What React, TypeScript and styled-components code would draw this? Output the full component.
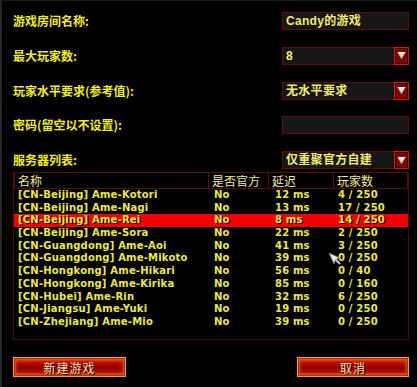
import React from "react";
import styled, { createGlobalStyle } from "styled-components";

const Global = createGlobalStyle`
  html, body { margin: 0; padding: 0; background: #000; }
  body { width: 417px; height: 387px; overflow: hidden; }
`;

const Screen = styled.div`
  position: relative;
  box-sizing: border-box;
  width: 417px;
  height: 387px;
  background: #000;
  border-left: 2px solid #262626;
  border-top: 1px solid #1c1c1c;
  padding: 11px 8px 0 11px;
  display: flex;
  flex-direction: column;
  font-family: "Noto Sans CJK SC", "Liberation Sans", sans-serif;
`;

const Form = styled.div`
  display: flex;
  flex-direction: column;
  gap: 16.75px;
`;

const FormRow = styled.div`
  display: flex;
  align-items: center;
  justify-content: space-between;
  height: 18px;
`;

const Label = styled.span`
  color: #f4ee1a;
  font-size: 12px;
  font-weight: 700;
  line-height: 18px;
  text-shadow: 1px 1px 0 #000;
  white-space: nowrap;
`;

const Field = styled.div`
  box-sizing: border-box;
  width: 127px;
  height: 18px;
  display: flex;
  align-items: stretch;
  background: #161616;
  border: 1px solid #5e0c0c;
`;

const FieldText = styled.span`
  flex: 1;
  padding-left: 3px;
  color: #f2ec6a;
  font-size: 12px;
  font-weight: 700;
  line-height: 16px;
  font-family: "Liberation Sans", "Noto Sans CJK SC", sans-serif;
  letter-spacing: 0.3px;
  white-space: nowrap;
`;

const ArrowBtn = styled.div`
  box-sizing: border-box;
  width: 15px;
  margin: -1px -1px -1px 0;
  background: #7a0606;
  border: 1px solid #d01a1a;
  box-shadow: inset 0 0 0 1px #4a0000;
  display: flex;
  align-items: center;
  justify-content: center;
`;

const Table = styled.div`
  box-sizing: border-box;
  margin-top: 3px;
  height: 168px;
  border: 1px solid #4a0a0a;
  border-top: none;
  display: flex;
  flex-direction: column;
`;

const cols = "195px 60px 65px 1fr";

const HeaderRow = styled.div`
  display: grid;
  grid-template-columns: ${cols};
  height: 17px;
`;

const HeaderCell = styled.div`
  box-sizing: border-box;
  border: 1px solid #5a0c0c;
  margin-left: -1px;
  padding-left: 3px;
  color: #f0ea9a;
  font-size: 12px;
  line-height: 15px;
  white-space: nowrap;
  &:first-child { margin-left: 0; }
`;

const DataRow = styled.div<{ $sel?: boolean }>`
  display: grid;
  grid-template-columns: ${cols};
  height: 12.7px;
  background: ${(p) => (p.$sel ? "#f20000" : "transparent")};
`;

const Cell = styled.div<{ $pad: number }>`
  padding-left: ${(p) => p.$pad}px;
  color: #ecea3c;
  font-family: "DejaVu Sans", "Liberation Sans", sans-serif;
  font-size: 10px;
  font-weight: 700;
  letter-spacing: 0.2px;
  line-height: 12.7px;
  white-space: nowrap;
  text-shadow: 1px 1px 0 #000;
`;

const Buttons = styled.div`
  margin-top: 17px;
  display: flex;
  justify-content: space-between;
`;

const GameButton = styled.div<{ $w: number }>`
  box-sizing: border-box;
  width: ${(p) => p.$w}px;
  height: 20px;
  border: 1px solid #f0a040;
  background: linear-gradient(
    to bottom,
    #e04a10 0%,
    #b80c04 25%,
    #8e0000 55%,
    #b00a02 80%,
    #e05010 100%
  );
  box-shadow: inset 0 0 0 1px #b03000, inset 0 0 3px 2px #e06010;
  display: flex;
  align-items: center;
  justify-content: center;
  color: #f2e2b0;
  font-size: 12px;
  letter-spacing: 1px;
  text-shadow: 1px 1px 0 #300;
`;

const Cursor = styled.svg`
  position: absolute;
  left: 326px;
  top: 251px;
`;

const Arrow = () => (
  <ArrowBtn>
    <svg width="9" height="9" viewBox="0 0 9 9">
      <defs>
        <linearGradient id="tri" x1="0" y1="0" x2="0" y2="1">
          <stop offset="0" stopColor="#ffffff" />
          <stop offset="1" stopColor="#9a9a9a" />
        </linearGradient>
      </defs>
      <path d="M0.5 1 L8.5 1 L4.5 8.5 Z" fill="url(#tri)" />
    </svg>
  </ArrowBtn>
);

const rows: [string, string, string, string][] = [
  ["[CN-Beijing] Ame-Kotori", "No", "12 ms", "4 / 250"],
  ["[CN-Beijing] Ame-Nagi", "No", "13 ms", "17 / 250"],
  ["[CN-Beijing] Ame-Rei", "No", "8 ms", "14 / 250"],
  ["[CN-Beijing] Ame-Sora", "No", "22 ms", "2 / 250"],
  ["[CN-Guangdong] Ame-Aoi", "No", "41 ms", "3 / 250"],
  ["[CN-Guangdong] Ame-Mikoto", "No", "39 ms", "0 / 250"],
  ["[CN-Hongkong] Ame-Hikari", "No", "56 ms", "0 / 40"],
  ["[CN-Hongkong] Ame-Kirika", "No", "85 ms", "0 / 160"],
  ["[CN-Hubei] Ame-Rin", "No", "32 ms", "6 / 250"],
  ["[CN-Jiangsu] Ame-Yuki", "No", "19 ms", "0 / 250"],
  ["[CN-Zhejiang] Ame-Mio", "No", "39 ms", "0 / 250"],
];

export default function App() {
  return (
    <>
      <Global />
      <Screen>
        <Form>
          <FormRow>
            <Label>游戏房间名称:</Label>
            <Field>
              <FieldText>Candy的游戏</FieldText>
            </Field>
          </FormRow>
          <FormRow>
            <Label>最大玩家数:</Label>
            <Field>
              <FieldText>8</FieldText>
              <Arrow />
            </Field>
          </FormRow>
          <FormRow>
            <Label>玩家水平要求(参考值):</Label>
            <Field>
              <FieldText>无水平要求</FieldText>
              <Arrow />
            </Field>
          </FormRow>
          <FormRow>
            <Label>密码(留空以不设置):</Label>
            <Field>
              <FieldText />
            </Field>
          </FormRow>
          <FormRow>
            <Label>服务器列表:</Label>
            <Field>
              <FieldText>仅重聚官方自建</FieldText>
              <Arrow />
            </Field>
          </FormRow>
        </Form>
        <Table>
          <HeaderRow>
            <HeaderCell>名称</HeaderCell>
            <HeaderCell>是否官方</HeaderCell>
            <HeaderCell>延迟</HeaderCell>
            <HeaderCell>玩家数</HeaderCell>
          </HeaderRow>
          {rows.map((r, i) => (
            <DataRow key={i} $sel={i === 2}>
              <Cell $pad={4}>{r[0]}</Cell>
              <Cell $pad={5}>{r[1]}</Cell>
              <Cell $pad={6}>{r[2]}</Cell>
              <Cell $pad={4}>{r[3]}</Cell>
            </DataRow>
          ))}
        </Table>
        <Buttons>
          <GameButton $w={113}>新建游戏</GameButton>
          <GameButton $w={112}>取消</GameButton>
        </Buttons>
        <Cursor width="14" height="14" viewBox="0 0 14 14">
          <path d="M1 1 L12 6 L7.5 7.5 L6 12 Z" fill="#e8e8f0" stroke="#6a6a7a" strokeWidth="0.8" />
          <path d="M7.5 7.5 L12 12" stroke="#c8c8d0" strokeWidth="2" />
        </Cursor>
      </Screen>
    </>
  );
}
